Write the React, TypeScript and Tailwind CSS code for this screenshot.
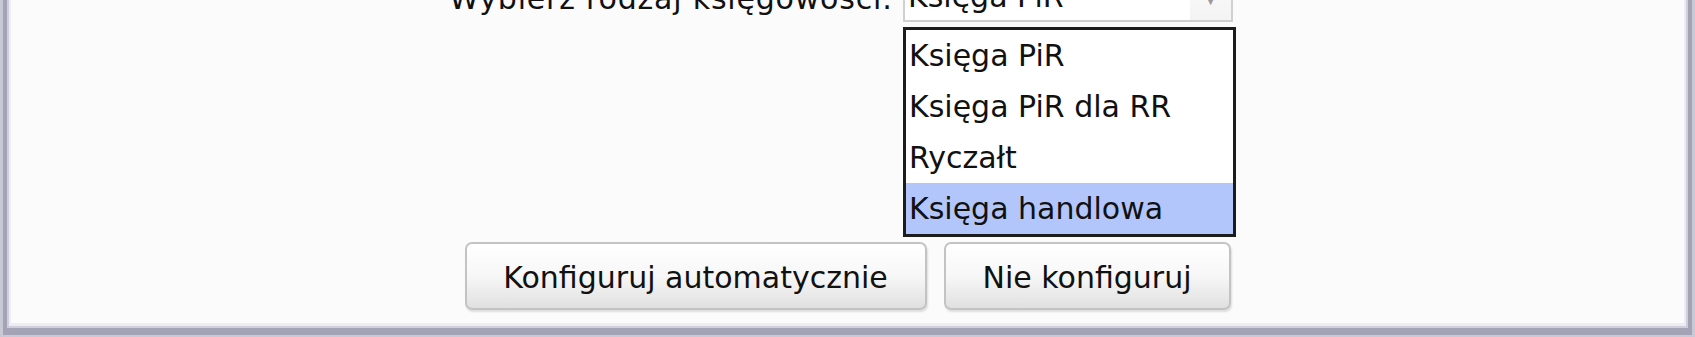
import React from 'react';

const options = ['Księga PiR', 'Księga PiR dla RR', 'Ryczałt', 'Księga handlowa'];

const font = { fontFamily: '"DejaVu Sans", Verdana, sans-serif' };

export default function App() {
  const selected = 3;

  return (
    <div className="w-[1695px] h-[337px] overflow-hidden bg-[#fbfbfb]" style={font}>
      {/* window frame */}
      <div className="flex h-full flex-col border-x-[3px] border-b-[2px] border-[#c9c9d5]">
        <div className="flex flex-1 flex-col border-x-[4px] border-b-[7px] border-[#a3a3b6]">
          <div className="flex flex-1 flex-col border-x-[2px] border-b-[2px] border-[#cfcfdb]">
            <div className="flex flex-1 flex-col border-x-[2px] border-b-[3px] border-[#ececf2] bg-[#fbfbfb] text-[#111]">
              {/* account type row */}
              <div className="-mt-[30px] flex h-[52px] items-start pl-[432px]">
                <div className="h-[52px] w-[450px] text-right text-[30px] leading-[57px] tracking-[0.8px]">
                  Wybierz rodzaj księgowości:
                </div>
                <div className="relative ml-[10px] w-[330px]">
                  <div className="flex h-[52px] border-2 border-[#d0d0d0] bg-white">
                    <div className="flex-1 pl-[3px] text-[30px] leading-[50px]">Księga PiR</div>
                    <div className="flex w-[41px] items-center justify-center bg-gradient-to-b from-[#fdfdfd] to-[#f3f3f3]">
                      <span className="mt-[8px] text-[10px] text-[#9a9a9a]">▼</span>
                    </div>
                  </div>
                  {/* open list */}
                  <ul className="absolute left-0 top-[57px] w-[333px] border-[3px] border-[#1c1c1c] bg-white">
                    {options.map((o, i) => (
                      <li
                        key={o}
                        className={
                          'h-[51px] pl-[3px] text-[30px] leading-[51px] ' +
                          (i === selected ? 'bg-[#b3c6fb]' : '')
                        }
                      >
                        {o}
                      </li>
                    ))}
                  </ul>
                </div>
              </div>

              {/* buttons */}
              <div className="mt-[220px] flex justify-center gap-[17px]">
                <button className="h-[68px] w-[462px] rounded-[7px] border-2 border-[#c3c3c3] bg-gradient-to-b from-white via-[#f7f7f7] to-[#e0e0e0] pt-[2px] text-[30px] text-[#111] shadow-[1px_2px_2px_rgba(0,0,0,0.12)]">
                  Konfiguruj automatycznie
                </button>
                <button className="h-[68px] w-[287px] rounded-[7px] border-2 border-[#c3c3c3] bg-gradient-to-b from-white via-[#f7f7f7] to-[#e0e0e0] pt-[2px] text-[30px] text-[#111] shadow-[1px_2px_2px_rgba(0,0,0,0.12)]">
                  Nie konfiguruj
                </button>
              </div>
            </div>
          </div>
        </div>
      </div>
    </div>
  );
}
